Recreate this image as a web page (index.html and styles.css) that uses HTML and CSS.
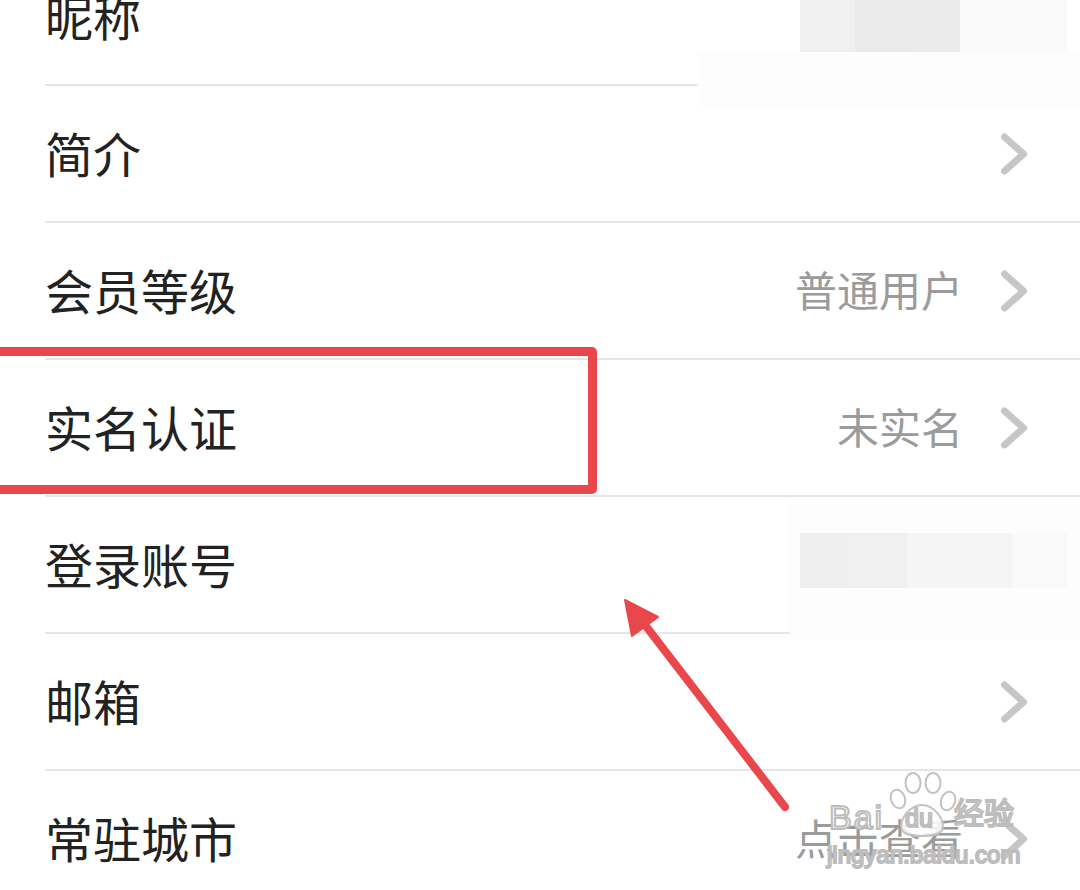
FILE: index.html
```html
<!DOCTYPE html>
<html lang="zh-CN">
<head>
<meta charset="utf-8">
<title>个人资料</title>
<link rel="stylesheet" href="styles.css">
</head>
<body>
<div class="page">
  <div class="list">
    <div class="row"><span class="label">昵称</span></div>
    <div class="row"><span class="label">简介</span>
      <svg class="chev" viewBox="0 0 28 44" width="28" height="44"><polyline points="4.5,5 23.5,22 4.5,39"/></svg></div>
    <div class="row"><span class="label">会员等级</span><span class="value">普通用户</span>
      <svg class="chev" viewBox="0 0 28 44" width="28" height="44"><polyline points="4.5,5 23.5,22 4.5,39"/></svg></div>
    <div class="row"><span class="label">实名认证</span><span class="value">未实名</span>
      <svg class="chev" viewBox="0 0 28 44" width="28" height="44"><polyline points="4.5,5 23.5,22 4.5,39"/></svg></div>
    <div class="row"><span class="label">登录账号</span></div>
    <div class="row"><span class="label">邮箱</span>
      <svg class="chev" viewBox="0 0 28 44" width="28" height="44"><polyline points="4.5,5 23.5,22 4.5,39"/></svg></div>
    <div class="row"><span class="label">常驻城市</span><span class="value">点击查看</span>
      <svg class="chev" viewBox="0 0 28 44" width="28" height="44"><polyline points="4.5,5 23.5,22 4.5,39"/></svg></div>
  </div>

  <!-- blurred (mosaic) areas -->
  <div class="haze haze-top"></div>
  <div class="mosaic mosaic-top">
    <span class="m m1"></span><span class="m m2"></span><span class="m m3"></span><span class="m m4"></span>
  </div>
  <div class="haze haze-mid"></div>
  <div class="mosaic mosaic-mid">
    <span class="m n1"></span><span class="m n2"></span><span class="m n3"></span><span class="m n4"></span>
  </div>

  <!-- annotations -->
  <div class="redbox"></div>
  <svg class="arrow" width="1080" height="890" viewBox="0 0 1080 890">
    <line x1="785" y1="807" x2="642" y2="621" />
    <polygon points="625,600 632,636 658,617" />
  </svg>

  <!-- watermark -->
  <div class="wm">
    <svg class="paw" width="72" height="68" viewBox="0 0 72 68">
      <ellipse cx="13" cy="28" rx="7" ry="9.5" transform="rotate(-20 13 28)"/>
      <ellipse cx="28" cy="12" rx="7.5" ry="10"/>
      <ellipse cx="48" cy="12" rx="7.5" ry="10"/>
      <ellipse cx="63" cy="30" rx="7" ry="9.5" transform="rotate(20 63 30)"/>
      <path d="M17 59 C 13 48, 26 34, 37 34 C 48 34, 61 48, 57 59 C 53 67, 21 67, 17 59 Z"/>
    </svg>
    <span class="wm-bai">Bai</span>
    <span class="wm-du">du</span>
    <span class="wm-jy">经验</span>
    <span class="wm-url">jingyan.baidu.com</span>
  </div>
</div>
</body>
</html>
```
FILE: styles.css
```css
html, body {
  margin: 0;
  padding: 0;
  background: #ffffff;
}
body {
  overflow: hidden;
  font-family: "Noto Sans CJK SC", "Noto Sans", sans-serif;
}
.page {
  position: relative;
  width: 1080px;
  height: 890px;
  overflow: hidden;
}
.list {
  margin-top: -51px;
}
.row {
  display: flex;
  align-items: center;
  height: 135px;
  margin-left: 45px;
  padding-right: 52px;
  border-bottom: 2px solid #e6e6e6;
}
.label {
  flex: 1;
  font-size: 48px;
  color: #222222;
  white-space: nowrap;
  margin-bottom: 4px;
}
.value {
  font-size: 42px;
  color: #9b9b9b;
  margin-right: 37px;
  white-space: nowrap;
  margin-bottom: 4px;
}
.chev {
  display: block;
  flex: none;
}
.chev polyline {
  fill: none;
  stroke: #c6c6c6;
  stroke-width: 7;
  stroke-linecap: round;
  stroke-linejoin: round;
}

/* mosaic blur patches */
.haze {
  position: absolute;
  background: #fdfdfd;
}
.haze-top {
  left: 698px;
  top: 52px;
  width: 382px;
  height: 58px;
}
.haze-mid {
  left: 790px;
  top: 500px;
  width: 290px;
  height: 140px;
}
.mosaic {
  position: absolute;
  display: flex;
}
.mosaic-top {
  left: 800px;
  top: 0;
  height: 52px;
}
.mosaic-mid {
  left: 800px;
  top: 533px;
  height: 55px;
}
.m {
  display: block;
  height: 100%;
}
.m1 { width: 55px; background: #f0f0f0; }
.m2 { width: 57px; background: #eaeaea; }
.m3 { width: 48px; background: #ebebeb; }
.m4 { width: 107px; background: #fafafa; }
.n1 { width: 48px; background: #efefef; }
.n2 { width: 59px; background: #f0f0f0; }
.n3 { width: 105px; background: #f5f5f5; }
.n4 { width: 55px; background: #f9f9f9; }

/* annotations */
.redbox {
  position: absolute;
  left: -12px;
  top: 347px;
  width: 609px;
  height: 147px;
  box-sizing: border-box;
  border: 9px solid #e8474b;
  border-radius: 5px;
}
.arrow {
  position: absolute;
  left: 0;
  top: 0;
}
.arrow line {
  stroke: #e8474b;
  stroke-width: 8;
  stroke-linecap: round;
}
.arrow polygon {
  fill: #e8474b;
  stroke: #e8474b;
  stroke-width: 2;
  stroke-linejoin: round;
}

/* watermark */
.wm {
  position: absolute;
  left: 820px;
  top: 766px;
  width: 220px;
  height: 112px;
  font-family: "Liberation Sans", Arial, sans-serif;
}
.wm span {
  position: absolute;
  white-space: nowrap;
  color: rgba(255, 255, 255, 0.85);
  -webkit-text-stroke: 2px #bdbdbd;
  line-height: 1;
}
.paw {
  position: absolute;
  left: 65px;
  top: 5px;
}
.paw ellipse, .paw path {
  fill: rgba(255, 255, 255, 0.85);
  stroke: #c2c2c2;
  stroke-width: 2;
}
.wm-bai {
  left: 9px;
  top: 34px;
  font-size: 34px;
  letter-spacing: 2px;
}
.wm-du {
  left: 85px;
  top: 40px;
  font-size: 25px;
}
.wm-jy {
  left: 134px;
  top: 30px;
  font-size: 30px;
  font-family: "Noto Sans CJK SC", sans-serif;
}
.wm-url {
  left: 7px;
  top: 77px;
  font-size: 24px;
}
```
